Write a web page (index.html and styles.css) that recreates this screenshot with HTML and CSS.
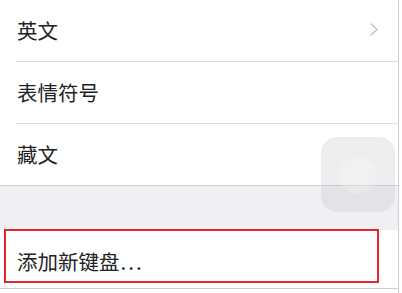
FILE: index.html
```html
<!DOCTYPE html>
<html lang="zh">
<head>
<meta charset="utf-8">
<link rel="stylesheet" href="styles.css">
</head>
<body>
<div class="screen">
  <div class="group">
    <div class="row first">
      <span class="label">英文</span>
      <svg class="chev" width="10" height="15" viewBox="0 0 10 15"><polyline points="1.5,1.5 8,7.5 1.5,13.5" fill="none" stroke="#c4c4c9" stroke-width="1.5"/></svg>
    </div>
    <div class="row"><span class="label">表情符号</span></div>
    <div class="row last"><span class="label">藏文</span></div>
  </div>
  <div class="gap"></div>
  <div class="group bottom">
    <div class="row add"><span class="label">添加新键盘<span class="dots">...</span></span></div>
  </div>
  <div class="highlight"></div>
  <div class="assist"><div class="assist-dot"></div></div>
</div>
</body>
</html>
```
FILE: styles.css
```css
html, body {
  margin: 0;
  padding: 0;
  background: #ffffff;
}
.screen {
  position: relative;
  width: 398px;
  height: 293px;
  border-right: 1px solid #cfcfd3;
  font-family: "Noto Sans CJK SC", "Noto Sans", sans-serif;
  color: #222222;
  overflow: hidden;
}
.group {
  background: #fff;
}
.row {
  height: 61px;
  display: flex;
  align-items: center;
  justify-content: space-between;
  margin-left: 16px;
  padding-left: 1px;
  padding-right: 19px;
  border-bottom: 1px solid #dcdce0;
}
.row.last {
  margin-left: 0;
  padding-left: 17px;
  height: 61px;
  border-bottom: 1px solid #cfcfd3;
}
.row.add {
  margin-left: 0;
  padding-left: 17px;
  padding-top: 4px;
  box-sizing: border-box;
  height: 59px;
  border-bottom: 1px solid #cfcfd3;
}
.label {
  font-size: 20.5px;
  line-height: 1;
}
.dots {
  letter-spacing: 2px;
  margin-left: 1px;
}
.chev {
  display: block;
  margin-top: -2px;
}
.gap {
  height: 44px;
  background: #efeff4;
}
.highlight {
  position: absolute;
  left: 4px;
  top: 229px;
  width: 371px;
  height: 50px;
  border: 2px solid #e2262b;
}
.assist {
  position: absolute;
  left: 321px;
  top: 137px;
  width: 74px;
  height: 75px;
  border-radius: 16px;
  background: rgba(200, 200, 206, 0.33);
}
.assist-dot {
  position: absolute;
  left: 18px;
  top: 19px;
  width: 38px;
  height: 38px;
  border-radius: 50%;
  background: rgba(255, 255, 255, 0.22);
}
```
